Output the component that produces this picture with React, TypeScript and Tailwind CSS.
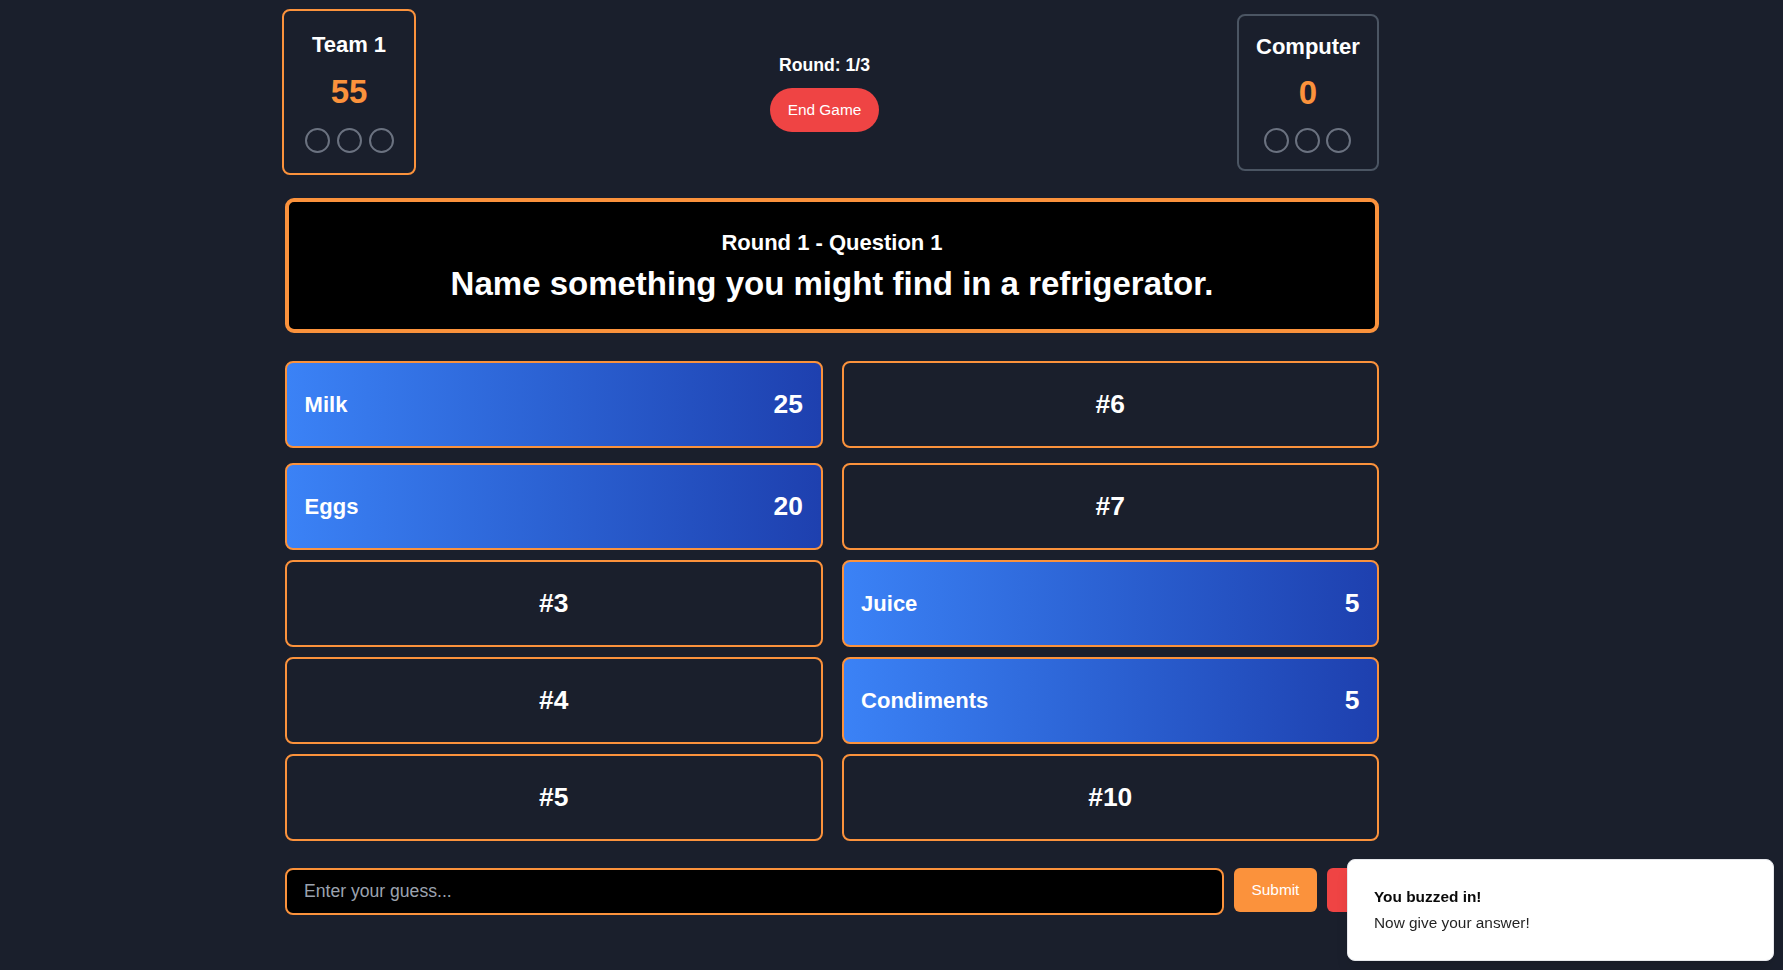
import React from "react";

type Answer = { label: string; points?: number };

const leftAnswers: Answer[] = [
  { label: "Milk", points: 25 },
  { label: "Eggs", points: 20 },
  { label: "#3" },
  { label: "#4" },
  { label: "#5" },
];

const rightAnswers: Answer[] = [
  { label: "#6" },
  { label: "#7" },
  { label: "Juice", points: 5 },
  { label: "Condiments", points: 5 },
  { label: "#10" },
];

function Strikes({ active }: { active?: boolean }) {
  return (
    <div className={`flex justify-center ${active ? "mt-[16px] gap-[7px]" : "mt-[15px] gap-[6px]"}`}>
      {[0, 1, 2].map((i) => (
        <div key={i} className="h-[25px] w-[25px] rounded-full border-2 border-[#6b7280]" />
      ))}
    </div>
  );
}

function ScoreCard({ name, score, active }: { name: string; score: number; active?: boolean }) {
  return (
    <div
      className={`rounded-lg border-2 px-2 text-center ${
        active
          ? "-ml-[3px] w-[134px] rounded-[9px] border-[#fb923c] pt-[19px] pb-[20px]"
          : "w-[142px] border-[#4b5563] py-4"
      }`}
    >
      <div className="text-[22px] leading-[30px] font-bold text-white">{name}</div>
      <div className={`${active ? "mt-[12px]" : "mt-[11px]"} text-[33px] leading-[40px] font-bold text-[#fb923c]`}>
        {score}
      </div>
      <Strikes active={active} />
    </div>
  );
}

function AnswerCard({ answer }: { answer: Answer }) {
  if (answer.points === undefined) {
    return (
      <div className="flex h-[87px] items-center justify-center rounded-lg border-2 border-[#fb923c] bg-[#1a1f2c]">
        <span className="text-[26.4px] font-bold text-white">{answer.label}</span>
      </div>
    );
  }
  return (
    <div className="flex h-[87px] items-center justify-between rounded-lg border-2 border-[#fb923c] bg-linear-to-r from-[#3b82f6] to-[#1e40af] px-[17.6px]">
      <span className="text-[22px] font-bold text-white">{answer.label}</span>
      <span className="text-[26.4px] font-bold text-white">{answer.points}</span>
    </div>
  );
}

export default function App() {
  return (
    <div className="min-h-screen bg-[#1a1f2c] font-['Liberation_Sans',Arial,sans-serif]">
      <div className="ml-[285px] w-[1094px] pt-[9px] pb-10">
        {/* header */}
        <div className="flex items-center justify-between">
          <ScoreCard name="Team 1" score={55} active />
          <div className="flex flex-col items-center pr-[4px]">
            <div className="mb-[10px] text-[17.6px] leading-[26px] font-bold text-white">Round: 1/3</div>
            <button className="h-[44px] rounded-full bg-[#ef4444] px-[17.6px] text-[15.4px] text-white">
              End Game
            </button>
          </div>
          <ScoreCard name="Computer" score={0} />
        </div>

        {/* question */}
        <div className="mt-[23px] rounded-[9px] border-4 border-[#fb923c] bg-black px-6 pt-[26px] pb-[25px] text-center text-white">
          <div className="mb-[6px] text-[22px] leading-[30px] font-bold">Round 1 - Question 1</div>
          <div className="text-[33px] leading-[40px] font-bold">Name something you might find in a refrigerator.</div>
        </div>

        {/* board */}
        <div className="mt-[28px] grid grid-flow-col grid-cols-2 grid-rows-[92px_87px_87px_87px_87px] items-start gap-x-[19px] gap-y-[10px]">
          {leftAnswers.map((a) => (
            <AnswerCard key={a.label} answer={a} />
          ))}
          {rightAnswers.map((a) => (
            <AnswerCard key={a.label} answer={a} />
          ))}
        </div>

        {/* guess */}
        <div className="mt-[27px] flex items-start gap-[10px]">
          <input
            type="text"
            placeholder="Enter your guess..."
            className="h-[47px] flex-1 rounded-lg border-2 border-[#fb923c] bg-black px-[17px] text-[17.6px] text-white outline-none placeholder:text-[#9ca3af]"
          />
          <button className="h-[44px] rounded-md bg-[#fb923c] px-[17.6px] text-[15.4px] text-white">Submit</button>
          <button aria-label="Pass" className="h-[44px] w-[52px] rounded-md bg-[#ef4444]" />
        </div>
      </div>

      {/* toast */}
      <div className="fixed right-[9px] bottom-[9px] w-[427px] rounded-lg border border-[#e5e7eb] bg-white p-[26px] pr-[35px] shadow-lg">
        <div className="text-[15.4px] leading-[22px] font-semibold text-[#0a0a0a]">You buzzed in!</div>
        <div className="mt-1 text-[15.4px] leading-[22px] text-[#0a0a0a] opacity-90">Now give your answer!</div>
      </div>
    </div>
  );
}
